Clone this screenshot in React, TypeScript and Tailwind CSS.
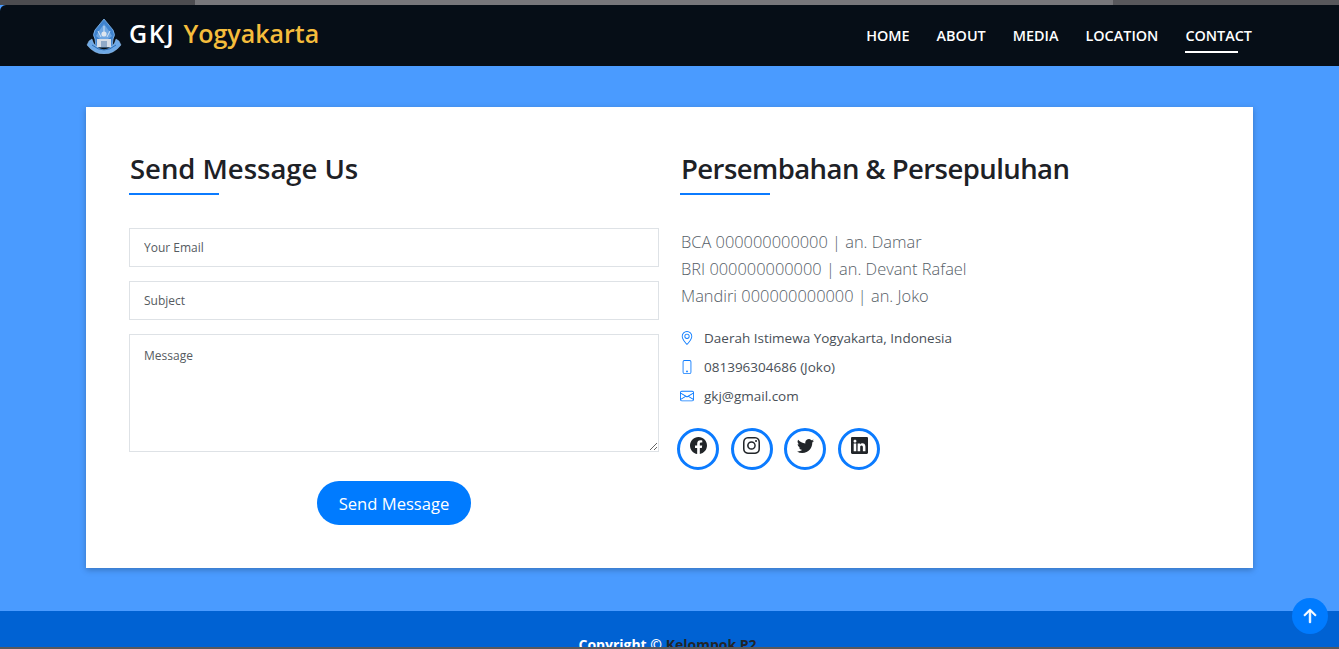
import { BsArrowUpShort, BsEnvelope, BsFacebook, BsGeoAlt, BsInstagram, BsLinkedin, BsPhone, BsTwitter } from 'react-icons/bs';

const navItems = ['HOME', 'ABOUT', 'MEDIA', 'LOCATION', 'CONTACT'];

const bankLines = [
    'BCA 000000000000 | an. Damar',
    'BRI 000000000000 | an. Devant Rafael',
    'Mandiri 000000000000 | an. Joko',
];

const contacts = [
    { icon: BsGeoAlt, text: 'Daerah Istimewa Yogyakarta, Indonesia' },
    { icon: BsPhone, text: '081396304686 (Joko)' },
    { icon: BsEnvelope, text: 'gkj@gmail.com' },
];

const socials = [BsFacebook, BsInstagram, BsTwitter, BsLinkedin];

function Logo() {
    return (
        <svg width="36" height="36" viewBox="0 0 36 36" className="mt-[1px] shrink-0">
            {/* Gunungan */}
            <path d="M18 1 L27 12 Q30 17 27 21 L26 29 L10 29 L9 21 Q6 17 9 12 Z" fill="#3f83cf" stroke="#86bbf0" strokeWidth="0.8" />
            <path d="M18 6 L23 13 L26 18 L22 21 L14 21 L10 18 L13 13 Z" fill="#6ea6e2" />
            <path d="M12 13 L15 19 M24 13 L21 19 M18 8 L18 14" stroke="#cfe2f6" strokeWidth="1" />
            <circle cx="18" cy="16" r="2.6" fill="#dfe6ee" />
            <path d="M11 21 H25 V29 H11 Z" fill="#d5dce6" />
            <path d="M15 23 H21 V29 H15 Z" fill="#8fa9c8" />
            {/* Pita */}
            <path d="M3 23 L6 21 Q8 30 18 32 Q28 30 30 21 L33 23 L35 27 Q28 36 18 36 Q8 36 1 27 Z" fill="#6ea9e6" stroke="#a8d0f4" strokeWidth="0.4" />
            <path d="M6 27 Q18 37 30 27" fill="none" stroke="#2d6fb8" strokeWidth="1" />
        </svg>
    );
}

function SectionTitle({ title, className }: { title: string; className: string }) {
    return (
        <div className="h-[47px]">
            <h2 className={`pt-[1px] pl-[1px] text-[27.5px] leading-[36px] font-[550] text-[#1d2126] ${className}`}>{title}</h2>
            <div className="mt-[6px] h-[2px] w-[90px] bg-[#0b7bff]" />
        </div>
    );
}

export default function App() {
    return (
        <div className="relative flex h-[649px] flex-col overflow-hidden bg-[#4a9bff] font-['Open_Sans',sans-serif]">
            {/* Barra do navegador */}
            <div className="flex h-[5px] shrink-0">
                <div className="w-[195px] bg-[#4c4c50]" />
                <div className="w-[918px] bg-[#77777b]" />
                <div className="flex-1 bg-[#58585c]" />
            </div>

            {/* Navbar */}
            <header className="flex h-[61px] shrink-0 items-center justify-between rounded-tl-[6px] bg-[#060e17] pr-[87px] pl-[86px]">
                <div className="flex items-center gap-[7px]">
                    <Logo />
                    <span className="mb-[5px] text-[25px] leading-[32px] font-semibold text-white">
                        <span className="tracking-[1.6px]">GKJ</span>
                        <span className="ml-[8px] text-[#f5bd3c]">Yogyakarta</span>
                    </span>
                </div>
                <nav className="flex gap-[27px] pt-[1px]">
                    {navItems.map((item) => (
                        <a key={item} className="relative text-[14.4px] leading-[20px] font-semibold text-white">
                            {item}
                            {item === 'CONTACT' && <span className="absolute top-[25px] left-0 h-[2px] w-[53px] bg-white" />}
                        </a>
                    ))}
                </nav>
            </header>

            {/* Conteudo */}
            <main className="flex-1 px-[86px] pt-[41px]">
                <div className="flex h-[461px] bg-white pt-[43px] pl-[43px] shadow-[0_2px_6px_rgba(0,0,0,0.25)]">
                    <section className="w-[530px]">
                        <SectionTitle title="Send Message Us" className="tracking-[-0.03px]" />
                        <form className="mt-[31px] flex flex-col gap-[14px]">
                            <input placeholder="Your Email" className="h-[39px] border border-[#dee2e6] px-[14px] text-[12px] text-[#495057] placeholder:text-[#555b61]" />
                            <input placeholder="Subject" className="h-[39px] border border-[#dee2e6] px-[14px] text-[12px] text-[#495057] placeholder:text-[#555b61]" />
                            <textarea placeholder="Message" className="h-[118px] border border-[#dee2e6] px-[14px] py-[12px] text-[12px] text-[#495057] placeholder:text-[#555b61]" />
                            <div className="mt-[15px] flex justify-center">
                                <button type="button" className="h-[44px] w-[154px] rounded-full bg-[#007bff] pt-[2px] text-[16.6px] text-white">
                                    Send Message
                                </button>
                            </div>
                        </form>
                    </section>

                    <section className="ml-[21px] flex-1">
                        <SectionTitle title="Persembahan & Persepuluhan" className="tracking-[-0.57px]" />
                        <div className="mt-[31px] pl-[1px] text-[16.4px] leading-[27px] font-light text-[#565e67]">
                            {bankLines.map((line) => (
                                <p key={line}>{line}</p>
                            ))}
                        </div>
                        <ul className="mt-[19px] flex flex-col gap-[9px]">
                            {contacts.map(({ icon: Icon, text }) => (
                                <li key={text} className="flex h-[20px] items-center gap-[10px] text-[13.5px] text-[#495057]">
                                    <Icon className="h-[14px] w-[14px] text-[#0b7bff]" />
                                    <span>{text}</span>
                                </li>
                            ))}
                        </ul>
                        <div className="mt-[22px] -ml-[3px] flex gap-[11.7px]">
                            {socials.map((Icon, i) => (
                                <a key={i} className="flex h-[42px] w-[42px] items-center justify-center rounded-full border-[3px] border-[#0b7bff] pb-[7px] text-[#212529]">
                                    <Icon className="h-[17px] w-[17px]" />
                                </a>
                            ))}
                        </div>
                    </section>
                </div>
            </main>

            {/* Footer */}
            <footer className="h-[36px] shrink-0 bg-[#0062d3] pt-[24px] pr-[4px] text-center text-[14px] leading-[20px] font-bold text-white">
                Copyright © <span className="text-[#212529]">Kelompok P2</span>
            </footer>
            <div className="h-[2px] shrink-0 bg-[#58585c]" />

            <button type="button" className="absolute top-[598px] left-[1292px] flex h-[36px] w-[36px] items-center justify-center rounded-full bg-[#007bff] text-white">
                <BsArrowUpShort className="h-[28px] w-[28px] stroke-[0.3px]" />
            </button>
        </div>
    );
}
